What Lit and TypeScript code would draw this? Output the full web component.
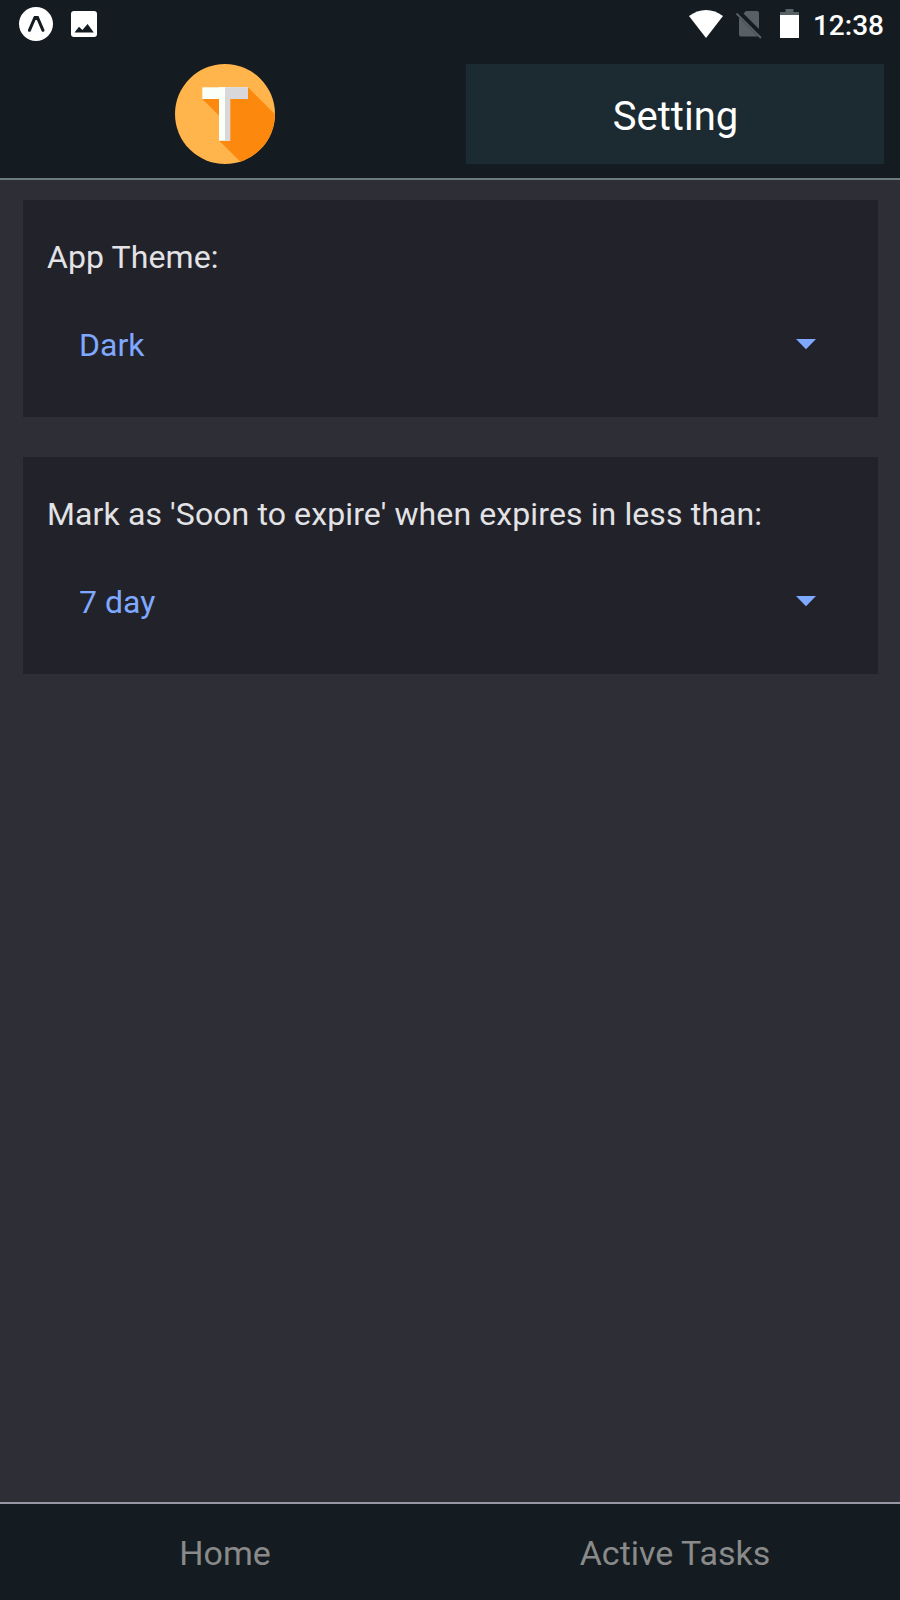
import { LitElement, html, css } from "lit";
import { customElement, property } from "lit/decorators.js";

@customElement("status-bar")
class StatusBar extends LitElement {
  static styles = css`
    :host { display: flex; justify-content: space-between; align-items: center; height: 48px; padding: 0 16px 0 19px; }
    .group { display: flex; align-items: center; }
    svg { display: block; }
    .time { font-size: 28px; font-weight: 500; line-height: 34px; padding-top: 3px; color: #fff; }
  `;
  render() {
    return html`
      <div class="group">
        <svg width="80" height="48" viewBox="19 0 80 48">
          <circle cx="36" cy="24" r="17" fill="#fff" />
          <path d="M29.4 30.3 35 17.4H37.4L43 30.3" fill="none" stroke="#141c21" stroke-width="3" stroke-linecap="round" stroke-linejoin="round" />
          <path d="M34.2 16H38.2L39.2 20H33.2Z" fill="#141c21" />
          <rect x="71" y="11" width="26" height="26" rx="3" fill="#fff" />
          <path d="M74.5 32.5 79 26.8 82.4 30 87.6 24 93.8 32.5Z" fill="#141c21" />
        </svg>
      </div>
      <div class="group">
        <svg width="124" height="48" viewBox="689 0 124 48">
          <path d="M689 16Q697 10 706 10T723 16L706 38Z" fill="#fff" />
          <path d="M746 11H757Q759 11 759 13V29L743.5 13.5ZM739 17.5 758 36.5H741Q739 36.5 739 34.5Z" fill="#576064" />
          <path d="M736.5 13.5 761 38" stroke="#576064" stroke-width="2" />
          <path d="M785.5 9H793.5V12H799V15H780V12H785.5Z" fill="#576064" />
          <rect x="780" y="15" width="19" height="23" fill="#fff" />
        </svg>
        <span class="time">12:38</span>
      </div>
    `;
  }
}

@customElement("app-logo")
class AppLogo extends LitElement {
  static styles = css`
    :host { display: block; }
    svg { display: block; }
  `;
  render() {
    return html`
      <svg width="100" height="100" viewBox="0 0 100 100">
        <defs><clipPath id="disc"><circle cx="50" cy="50" r="50" /></clipPath></defs>
        <g clip-path="url(#disc)">
          <rect width="100" height="100" fill="#ffb54c" />
          <path d="M73 23.3 150 100.3V162H130L44.3 76.7V51.7L27.3 35Z" fill="#fc890e" />
          <rect x="27.3" y="23.3" width="45.7" height="11.7" fill="#fafffa" />
          <rect x="44" y="23.3" width="11" height="53.5" fill="#fafffa" />
          <path d="M50 23.3H73V35H55.3V76.8H50Z" fill="#d8d8da" />
        </g>
      </svg>
    `;
  }
}

@customElement("setting-card")
class SettingCard extends LitElement {
  @property() label = "";
  @property() value = "";
  static styles = css`
    :host { display: block; box-sizing: border-box; height: 217px; padding: 38px 24px 0; background: #22222b; }
    .label, .picker { font-size: 32px; line-height: 38px; white-space: nowrap; }
    .label { color: #e3e3e5; letter-spacing: 0.11px; }
    .picker { display: flex; justify-content: space-between; align-items: center; margin-top: 50px; padding: 0 38px 0 32px; color: #7fa8ff; }
    svg { display: block; }
  `;
  render() {
    return html`
      <div class="label">${this.label}</div>
      <div class="picker">
        <span>${this.value}</span>
        <svg width="20" height="12" viewBox="0 0 20 12"><path d="M0 0H20L10 10.2Z" fill="#7fa8ff" /></svg>
      </div>
    `;
  }
}

@customElement("app-root")
class AppRoot extends LitElement {
  static styles = css`
    :host { display: flex; flex-direction: column; height: 1600px; background: #2e2e37; font-family: Roboto, sans-serif; }
    .top { background: #141c21; border-bottom: 2px solid #6a7b82; }
    .header { display: grid; grid-template-columns: 1fr 1fr; height: 130px; box-sizing: border-box; padding: 16px 0 14px; }
    .brand { display: flex; justify-content: center; }
    .title { display: flex; align-items: center; justify-content: center; margin: 0 16px; box-sizing: border-box; padding: 5px 0 0 1px; background: #1c2a31; color: #fff; font-size: 40px; }
    .content { flex: 1; display: flex; flex-direction: column; gap: 40px; padding: 20px 22px 0 23px; }
    .tabs { display: grid; grid-template-columns: 1fr 1fr; height: 96px; border-top: 2px solid #9797a5; background: #141c21; }
    .tab { display: flex; align-items: center; justify-content: center; padding-top: 1px; color: #8a8a8a; font-size: 34px; }
  `;
  render() {
    return html`
      <div class="top">
        <status-bar></status-bar>
        <div class="header">
          <div class="brand"><app-logo></app-logo></div>
          <div class="title">Setting</div>
        </div>
      </div>
      <main class="content">
        <setting-card label="App Theme:" value="Dark"></setting-card>
        <setting-card label="Mark as 'Soon to expire' when expires in less than:" value="7 day"></setting-card>
      </main>
      <nav class="tabs">
        <div class="tab">Home</div>
        <div class="tab">Active Tasks</div>
      </nav>
    `;
  }
}
